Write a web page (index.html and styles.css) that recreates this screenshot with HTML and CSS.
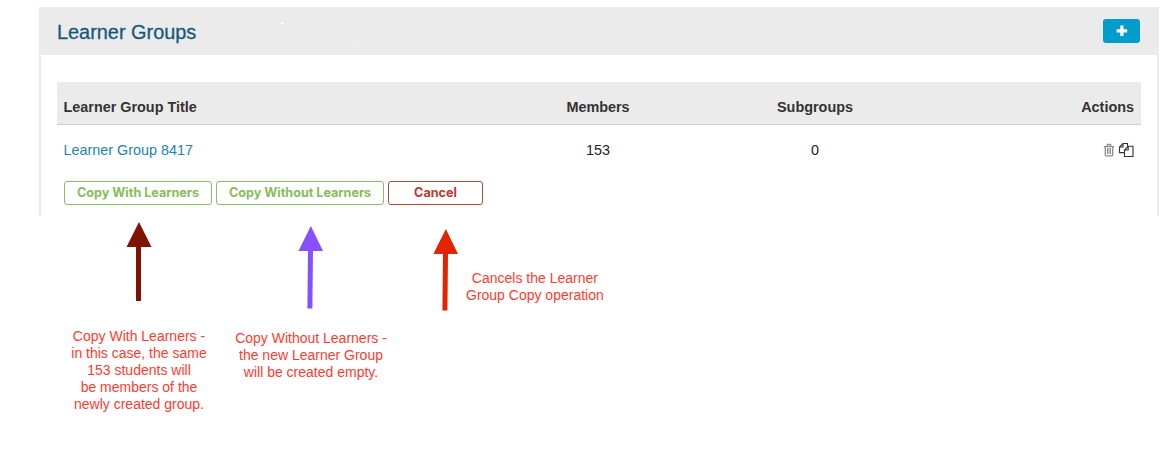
FILE: index.html
```html
<!DOCTYPE html>
<html lang="en">
<head>
<meta charset="utf-8">
<title>Learner Groups</title>
<link rel="stylesheet" href="styles.css">
</head>
<body>
<main class="page">
  <section class="panel">
    <header class="panel-head">
      <h1>Learner Groups</h1>
      <svg class="specks" width="90" height="30" viewBox="0 0 90 30"><path fill="#fff" d="M5 6h2v2H5zM82 24h1v1h-1z"/></svg>
      <button class="add" aria-label="Add"><svg width="12" height="12" viewBox="0 0 12 12"><path fill="#fff" d="M4.300.5h3.200v3.700H11.200v3.200H7.500V11H4.300V7.400H.6V4.200h3.700z"/></svg></button>
    </header>
    <div class="table">
      <div class="row head">
        <span class="title">Learner Group Title</span><span>Members</span><span>Subgroups</span><span class="last">Actions</span>
      </div>
      <div class="row">
        <a class="title">Learner Group 8417</a><span>153</span><span>0</span>
        <span class="last icons">
          <svg width="12" height="14" viewBox="0 0 12 14" fill="none" stroke="#8c8c8c"><path stroke-width="1.300" d="M.8 3.600h10.400M3.900 3.300l.6-1.800h3l.6 1.800M2.300 4v7.900q0 .9.900.9h5.600q.9 0 .9-.9V4"/><path d="M4.500 5v6M6 5v6M7.500 5v6"/></svg>
          <svg width="16" height="16" viewBox="0 0 16 16" fill="none" stroke="#333" stroke-width="1.100"><path d="M6 10.600H1.500V5L5 1.500H9.500v2.800M5 1.500V5H1.500M6.500 14.500V8L10.200 4.300H15v10.200zM10.200 4.300V8H6.500"/></svg>
        </span>
      </div>
      <div class="buttons">
        <button class="btn with">Copy With Learners</button>
        <button class="btn without">Copy Without Learners</button>
        <button class="btn cancel">Cancel</button>
      </div>
    </div>
  </section>
  <section class="notes">
    <div class="note note-with">
      <svg width="26" height="80" viewBox="0 0 26 80"><path fill="#821200" d="M13 0l12.500 25H15v54h-5V25H.5z"/></svg>
      <p>Copy With Learners -<br>in this case, the same<br>153 students will<br>be members of the<br>newly created group.</p>
    </div>
    <div class="note note-without">
      <svg width="26" height="84" viewBox="0 0 26 84"><path fill="#8750ff" d="M12.900 0l12.100 25H15l-.6 57.500h-5l.6-57.500H.4z"/></svg>
      <p>Copy Without Learners -<br>the new Learner Group<br>will be created empty.</p>
    </div>
    <div class="note note-cancel">
      <svg width="26" height="84" viewBox="0 0 26 84"><path fill="#e22400" d="M12.900 0l12.100 25H15l-.6 56.500h-5l.6-56.500H.4z"/></svg>
      <p>Cancels the Learner<br>Group Copy operation</p>
    </div>
  </section>
</main>
</body>
</html>
```

FILE: styles.css
```css
* { box-sizing: border-box; }
body { margin: 0; background: #fff; font-family: "Liberation Sans", Arial, sans-serif; color: #333; }
.page { width: 1170px; height: 473px; padding: 7px 11px 0 39px; overflow: hidden; }
.panel { height: 209px; border: solid #ecebeb; border-width: 0 2px; }
.panel-head { display: flex; align-items: center; height: 48px; padding: 0 17px 0 16px; background: #ecebeb; }
h1 { margin: 0; padding-top: 1px; width: 219px; font-size: 19.9px; line-height: 24px; font-weight: 400; color: #165a7a; -webkit-text-stroke: .3px #165a7a; }
.add { display: flex; align-items: center; justify-content: center; width: 37px; height: 24px; margin-left: auto; padding: 0; border: 0; border-radius: 3px; background: #009ccc; }
.table { margin: 27px 16px 0; }
.row { display: grid; grid-template-columns: 433px 216px 218px 1fr; align-items: center; height: 50px; padding-right: 7px; font-size: 14.4px; text-align: center; color: #222; }
.head { height: 43px; padding-top: 8px; background: #ecebeb; border-bottom: 1px solid #cfcfcf; font-weight: 700; color: #333; }
.title { padding-left: 6.5px; text-align: left; }
a.title { color: #2385ae; }
.last { text-align: right; }
.icons { display: flex; justify-content: flex-end; align-items: center; gap: 3px; }
.buttons { display: flex; gap: 4px; margin: 6px 0 0 7px; }
.btn { height: 24px; padding: 0; border: 1px solid #8abf63; border-radius: 3px; background: #fff; color: #85bd5b; font: 700 12.6px/20px Inter, sans-serif; white-space: nowrap; }
.with { width: 148px; }
.without { width: 168px; }
.cancel { width: 95px; color: #c0392b; border-color: #b54a36; }
.notes { display: flex; align-items: flex-start; color: #ff3b30; font-size: 14px; line-height: 17px; text-align: center; }
.notes p { margin: 0; white-space: nowrap; }
.note { display: flex; flex-direction: column; align-items: center; }
.note-with { width: 150px; margin: 6px 0 0 25px; }
.note-with p { margin-top: 26px; }
.note-without { width: 154px; margin: 10px 0 0 20px; }
.note-without p { margin-top: 20px; }
.note-cancel { flex-direction: row; margin: 13px 0 0 45px; align-items: flex-start; }
.note-cancel p { margin: 41px 0 0 7px; }
```
